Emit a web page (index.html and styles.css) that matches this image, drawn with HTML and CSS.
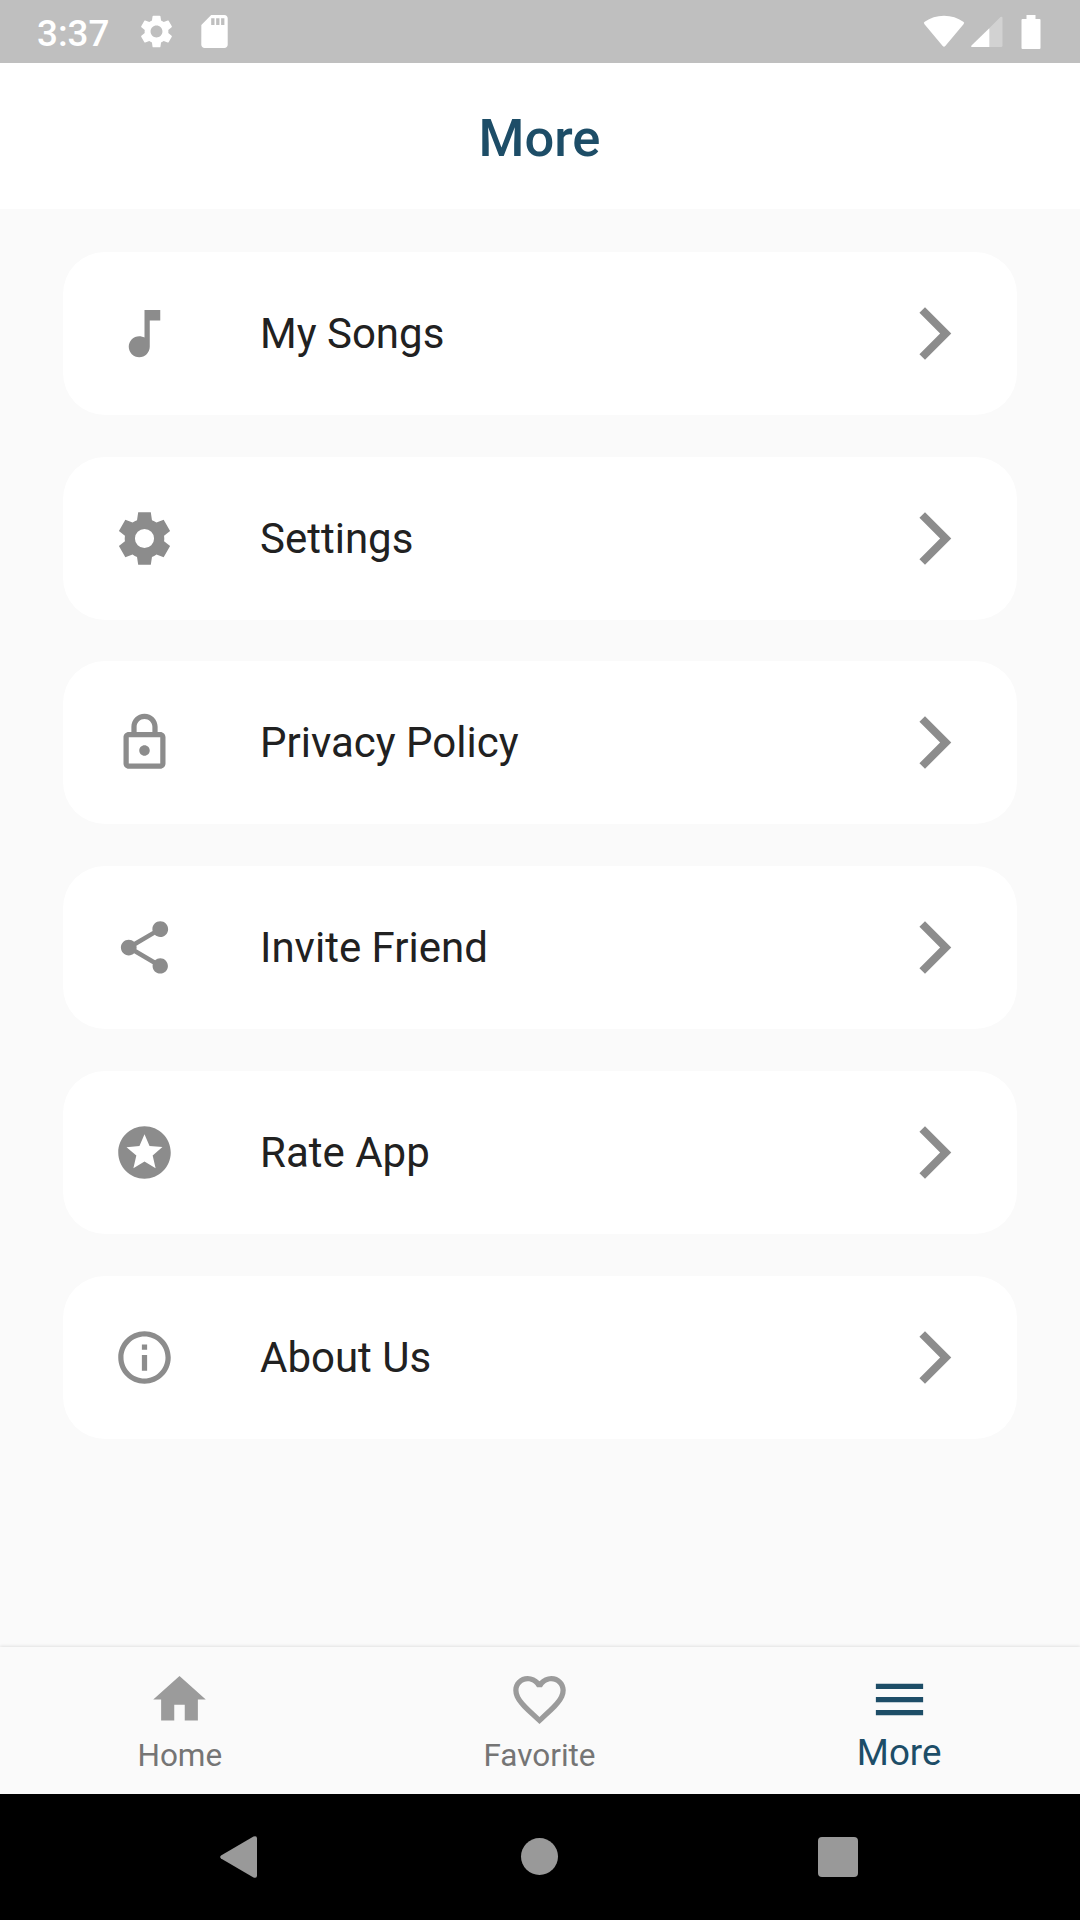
FILE: index.html
```html
<!DOCTYPE html>
<html lang="en">
<head>
<meta charset="utf-8">
<title>More</title>
<link rel="stylesheet" href="styles.css">
</head>
<body>
<div class="status">
  <div class="status-left">
    <span class="time">3:37</span>
    <svg class="s-gear" viewBox="2 2 20 20"><path d="M19.14 12.94c.04-.3.06-.61.06-.94 0-.32-.02-.64-.07-.94l2.03-1.58c.18-.14.23-.41.12-.61l-1.92-3.32c-.12-.22-.37-.29-.59-.22l-2.39.96c-.5-.38-1.03-.7-1.62-.94l-.36-2.54c-.04-.24-.24-.41-.48-.41h-3.84c-.24 0-.43.17-.47.41l-.36 2.54c-.59.24-1.13.57-1.62.94l-2.39-.96c-.22-.08-.47 0-.59.22L2.74 8.87c-.12.21-.08.47.12.61l2.03 1.58c-.05.3-.09.63-.09.94s.02.64.07.94l-2.03 1.58c-.18.14-.23.41-.12.61l1.92 3.32c.12.22.37.29.59.22l2.39-.96c.5.38 1.03.7 1.62.94l.36 2.54c.05.24.24.41.48.41h3.84c.24 0 .44-.17.47-.41l.36-2.54c.59-.24 1.13-.56 1.62-.94l2.39.96c.22.08.47 0 .59-.22l1.92-3.32c.12-.22.07-.47-.12-.61l-2.01-1.58zM12 15.600c-1.980 0-3.600-1.620-3.600-3.600s1.620-3.600 3.600-3.600 3.600 1.620 3.600 3.600-1.620 3.600-3.600 3.600z"/></svg>
    <svg class="s-card" viewBox="4 2 16 20"><path d="M18 2h-8L4.020 8 4 20c0 1.100.9 2 2 2h12c1.100 0 2-.9 2-2V4c0-1.100-.9-2-2-2zm-6 6h-2V4h2v4zm3 0h-2V4h2v4zm3 0h-2V4h2v4z"/></svg>
  </div>
  <div class="status-right">
    <svg class="s-wifi" viewBox="0 0 42 33"><path d="M1.500 9.200Q0 7.800 1.700 6.800Q10 .7 21 .7T40.300 6.800Q42 7.800 40.500 9.200L22.300 31Q21 32.300 19.700 31Z"/></svg>
    <svg class="s-signal" viewBox="0 0 32 32"><path class="dim" d="M18 12.500L29.500 1Q31.500 0 31.500 2V29.500Q31.500 31 30 31H18Z"/><path d="M18.300 12.300V31H1.500Q-.5 31 .5 29.600Z"/></svg>
    <svg class="s-battery" viewBox="0 0 20 34"><path d="M5.500 0h9v4H18.500Q19.500 4 19.500 5V33Q19.500 34 18.500 34H1.500Q.5 34 .5 33V5Q.5 4 1.500 4H5.500Z"/></svg>
  </div>
</div>
<header class="header"><h1>More</h1></header>
<main class="list">
  <a class="card">
    <svg class="icon" viewBox="0 0 24 24"><path d="M12 3v10.550c-.59-.34-1.270-.55-2-.55-2.210 0-4 1.790-4 4s1.790 4 4 4 4-1.790 4-4V7h4V3z"/></svg>
    <span class="label">My Songs</span>
    <svg class="icon" viewBox="0 0 24 24"><path d="M5.880 4.120L13.760 12l-7.880 7.880L8 22l10-10L8 2z"/></svg>
  </a>
  <a class="card">
    <svg class="icon" viewBox="0 0 24 24"><path fill-rule="evenodd" d="M9.600 2H14.400L14.850 5Q15.700 5.350 16.550 5.950L19.300 4.900 21.750 9.100 19.450 10.950Q19.600 12 19.450 13.050L21.750 14.900 19.300 19.100 16.550 18.050Q15.700 18.650 14.850 19L14.400 22H9.600L9.150 19Q8.300 18.650 7.450 18.050L4.700 19.100 2.250 14.900 4.550 13.050Q4.400 12 4.550 10.950L2.250 9.100 4.700 4.900 7.450 5.950Q8.300 5.350 9.150 5ZM12 8.350a3.650 3.650 0 1 0 0 7.300a3.650 3.650 0 1 0 0-7.300Z"/></svg>
    <span class="label">Settings</span>
    <svg class="icon" viewBox="0 0 24 24"><path d="M5.880 4.120L13.760 12l-7.880 7.880L8 22l10-10L8 2z"/></svg>
  </a>
  <a class="card">
    <svg class="icon" viewBox="0 0 24 24"><path d="M18 8h-1V6c0-2.760-2.240-5-5-5S7 3.240 7 6v2H6c-1.100 0-2 .9-2 2v10c0 1.100.9 2 2 2h12c1.100 0 2-.9 2-2V10c0-1.100-.9-2-2-2zM9 6c0-1.660 1.340-3 3-3s3 1.340 3 3v2H9V6zm9 14H6V10h12v10zm-6-3c1.100 0 2-.9 2-2s-.9-2-2-2-2 .9-2 2 .9 2 2 2z"/></svg>
    <span class="label">Privacy Policy</span>
    <svg class="icon" viewBox="0 0 24 24"><path d="M5.880 4.120L13.760 12l-7.880 7.880L8 22l10-10L8 2z"/></svg>
  </a>
  <a class="card">
    <svg class="icon" viewBox="0 0 24 24"><path d="M18 16.080c-.76 0-1.440.3-1.960.77L8.910 12.700c.05-.23.09-.46.09-.7s-.04-.47-.09-.7l7.050-4.110c.54.5 1.250.81 2.040.81 1.660 0 3-1.340 3-3s-1.340-3-3-3-3 1.340-3 3c0 .24.04.47.09.7L8.040 9.810C7.500 9.310 6.790 9 6 9c-1.660 0-3 1.340-3 3s1.340 3 3 3c.79 0 1.500-.31 2.040-.81l7.120 4.160c-.05.21-.08.43-.08.65 0 1.610 1.310 2.920 2.920 2.920s2.920-1.310 2.920-2.920-1.310-2.920-2.920-2.920z"/></svg>
    <span class="label">Invite Friend</span>
    <svg class="icon" viewBox="0 0 24 24"><path d="M5.880 4.120L13.760 12l-7.880 7.880L8 22l10-10L8 2z"/></svg>
  </a>
  <a class="card">
    <svg class="icon" viewBox="0 0 24 24"><path d="M11.990 2C6.470 2 2 6.480 2 12s4.470 10 9.990 10C17.520 22 22 17.520 22 12S17.520 2 11.990 2zm4.240 16L12 15.450 7.770 18l1.120-4.810-3.730-3.230 4.920-.42L12 5l1.920 4.530 4.920.42-3.730 3.230L16.230 18z"/></svg>
    <span class="label">Rate App</span>
    <svg class="icon" viewBox="0 0 24 24"><path d="M5.880 4.120L13.760 12l-7.880 7.880L8 22l10-10L8 2z"/></svg>
  </a>
  <a class="card">
    <svg class="icon" viewBox="0 0 24 24"><path d="M11 7h2v2h-2zm0 4h2v6h-2zm1-9C6.480 2 2 6.480 2 12s4.480 10 10 10 10-4.480 10-10S17.520 2 12 2zm0 18c-4.410 0-8-3.590-8-8s3.590-8 8-8 8 3.590 8 8-3.590 8-8 8z"/></svg>
    <span class="label">About Us</span>
    <svg class="icon" viewBox="0 0 24 24"><path d="M5.880 4.120L13.760 12l-7.880 7.880L8 22l10-10L8 2z"/></svg>
  </a>
</main>
<nav class="tabs">
  <a class="tab">
    <svg class="icon" viewBox="0 0 24 24"><path d="M10 20v-6h4v6h5v-8h3L12 3 2 12h3v8z"/></svg>
    <span>Home</span>
  </a>
  <a class="tab">
    <svg class="icon" viewBox="0 0 24 24"><path d="M16.500 3c-1.740 0-3.410.81-4.500 2.090C10.910 3.810 9.240 3 7.500 3 4.420 3 2 5.420 2 8.500c0 3.780 3.400 6.860 8.550 11.540L12 21.350l1.450-1.320C18.600 15.360 22 12.280 22 8.500 22 5.420 19.580 3 16.500 3zm-4.400 15.550l-.1.1-.1-.1C7.140 14.240 4 11.390 4 8.500 4 6.500 5.500 5 7.500 5c1.540 0 3.040.99 3.570 2.360h1.870C13.460 5.990 14.960 5 16.500 5c2 0 3.500 1.500 3.500 3.500 0 2.890-3.140 5.740-7.900 10.050z"/></svg>
    <span>Favorite</span>
  </a>
  <a class="tab active">
    <svg class="icon" viewBox="0 0 24 24"><path d="M3 18h18v-2H3v2zm0-5h18v-2H3v2zm0-7v2h18V6H3z"/></svg>
    <span>More</span>
  </a>
</nav>
<div class="system">
  <svg class="back" viewBox="0 0 38 42"><path d="M1 19.500L33.500.5Q37 -.8 37 2.500V39.500Q37 42.800 33.500 41.500L1 22.500Q-.6 21 1 19.500Z"/></svg>
  <span class="circle"></span>
  <span class="square"></span>
</div>
</body>
</html>
```
FILE: styles.css
```css
* { box-sizing: border-box; }
body {
  margin: 0;
  width: 1080px;
  height: 1920px;
  display: flex;
  flex-direction: column;
  background: #fafafa;
  font-family: Roboto, sans-serif;
  color: #212121;
  overflow: hidden;
}
svg { display: block; flex: none; fill: currentColor; }

.status {
  height: 63px;
  flex: none;
  display: flex;
  justify-content: space-between;
  padding: 0 39px 0 37px;
  background: #bfbfbf;
  color: #fff;
}
.status-left, .status-right { display: flex; align-items: center; }
.time { width: 103px; font-size: 36.75px; font-weight: 500; line-height: 43px; padding-top: 3px; }
.s-gear { width: 33px; height: 33px; }
.s-card { width: 27px; height: 33px; margin-left: 28px; }
.s-wifi { width: 42px; height: 33px; margin-right: 6px; }
.s-signal { width: 32px; height: 32px; margin-right: 18px; }
.s-battery { width: 20px; height: 34px; }
.dim { opacity: .3; }

.header {
  height: 146px;
  flex: none;
  display: flex;
  align-items: center;
  justify-content: center;
  padding-right: 1px;
  background: #fff;
}
h1 { margin: 0; font-size: 52.5px; font-weight: 500; line-height: 62px; color: #1d4d67; padding-top: 3px; }

.list {
  flex: 1;
  display: flex;
  flex-direction: column;
  gap: 41.8px;
  padding: 42.8px 63px 0;
}
.card {
  height: 163px;
  flex: none;
  display: flex;
  align-items: center;
  padding: 0 50px;
  background: #fff;
  border-radius: 42px;
}
.icon { width: 63px; height: 63px; color: #8c8c8c; }
.label { flex: 1; padding: 1px 0 0 84px; font-size: 42px; line-height: 50px; }

.tabs {
  height: 147px;
  flex: none;
  display: grid;
  grid-template-columns: repeat(3, 1fr);
  padding-right: 1px;
  background: #fafafa;
  box-shadow: 0 -1px 3px rgba(0, 0, 0, .1);
}
.tab {
  display: flex;
  flex-direction: column;
  align-items: center;
  padding-top: 21px;
  font-size: 31.5px;
  line-height: 50px;
  color: #757575;
}
.tab .icon { color: #9b9b9b; }
.tab.active, .tab.active .icon { color: #1d4d67; }
.tab.active { font-size: 36.75px; line-height: 43px; }

.system {
  height: 126px;
  flex: none;
  display: flex;
  align-items: center;
  padding: 0 222px 0 220px;
  justify-content: space-between;
  background: #000;
  color: #999;
}
.back { width: 38px; height: 42px; }
.circle { width: 37px; height: 37px; margin: 0 0 1px 3px; border-radius: 50%; background: #999; }
.square { width: 40px; height: 40px; border-radius: 4px; background: #999; }
```
